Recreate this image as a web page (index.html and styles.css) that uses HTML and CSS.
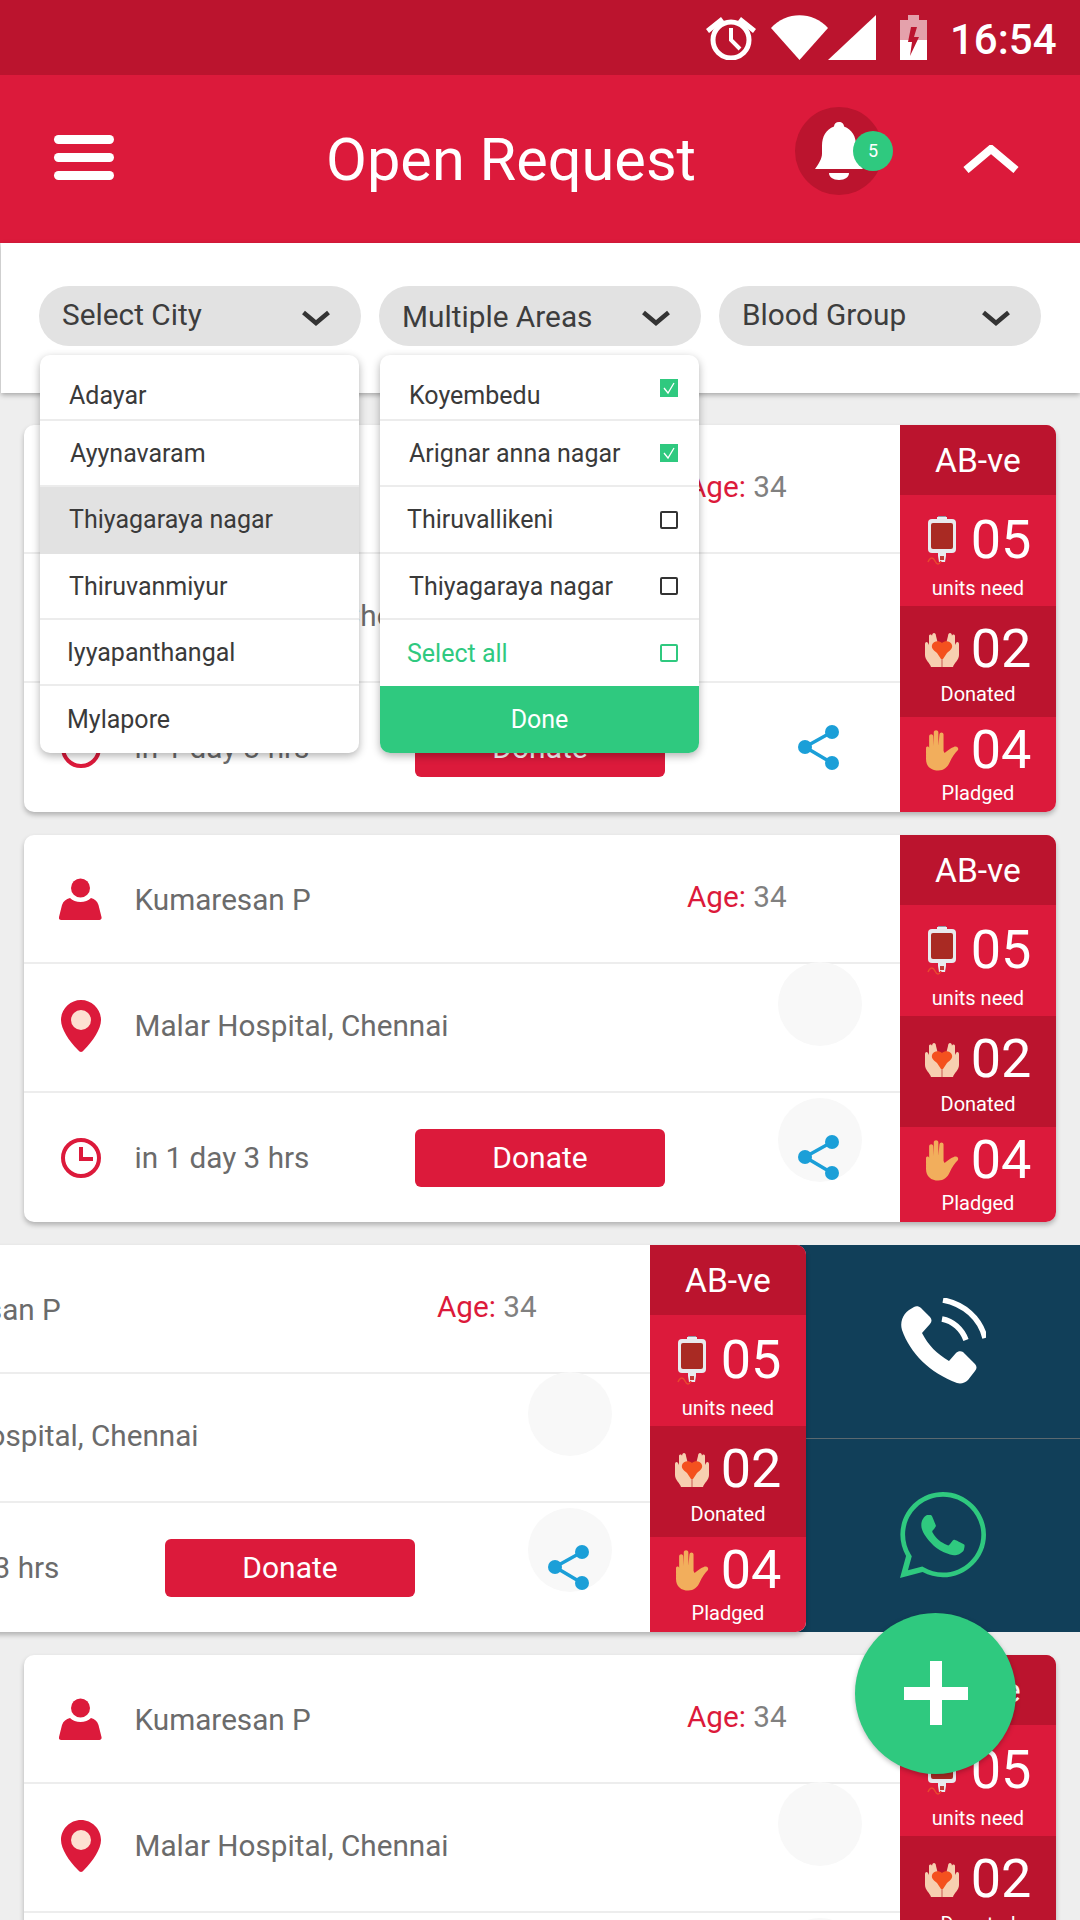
FILE: index.html
```html
<!DOCTYPE html>
<html lang="en">
<head>
<meta charset="utf-8">
<title>Open Request</title>
<link rel="stylesheet" href="styles.css">
</head>
<body>
<svg class="defs" width="0" height="0" aria-hidden="true">
  <symbol id="i-person" viewBox="0 0 43 42"><circle cx="21.5" cy="10" r="9.500"/><path d="M11 20c2.500 2.500 6.500 4 10.500 4s8-1.500 10.500-4c4 1 6 3 7.500 7l3 12c.4 2-.6 3-2 3H2c-1.400 0-2.400-1-2-3l3-12c1.500-4 4-6 8-7z"/></symbol>
  <symbol id="i-pin" viewBox="0 0 40 52"><path d="M20 0C9 0 0 9 0 20c0 9 8 21 17 30 2 2.500 4 2.500 6 0 9-9 17-21 17-30C40 9 31 0 20 0z"/><circle class="pin-dot" cx="20" cy="20" r="10"/></symbol>
  <symbol id="i-clock" viewBox="0 0 40 40"><circle class="line" cx="20" cy="20" r="18"/><path class="line" d="M20 9v12h12"/></symbol>
  <symbol id="i-share" viewBox="0 0 41 45"><path class="share-line" d="M34 7L7 22l27 16"/><circle cx="34" cy="7" r="7"/><circle cx="7" cy="22" r="7"/><circle cx="34" cy="38" r="7"/></symbol>
  <symbol id="i-bag" viewBox="0 0 30 49">
    <path fill="#8f9aa8" d="M11 0h8v4h-8z"/><path fill="#eceff1" d="M10 1h10v3h-10z"/>
    <rect fill="#e8eaee" x="1" y="3" width="28" height="34" rx="4"/>
    <rect fill="#a92a23" x="4" y="7" width="22" height="26" rx="2"/>
    <path fill="#e8eaee" d="M11 37h8v3l-1 6h-6l-1-6z"/><path fill="#c03a36" d="M13 40h4v4h-4z"/>
    <path class="tube" d="M1 46c2-5 5-5 7-1s4 4 6 0"/>
  </symbol>
  <symbol id="i-hands" viewBox="0 0 34 35">
    <path fill="#f7cfb0" d="M0 12c0-2 2-3 3-1l1 2V4c0-2 3-2 3 0 0-4 4-4 4 0l2 8 3.500 10v13H6c-1-4-6-7-6-12zM34 12c0-2-2-3-3-1l-1 2V4c0-2-3-2-3 0 0-4-4-4-4 0l-2 8-3.500 10v13H28c1-4 6-7 6-12z"/>
    <path fill="#e8b594" d="M16.500 26h1v9h-1z"/>
    <path fill="#f4511e" d="M7 13c1-4 7-5 10-2 3-3 9-2 10 2 1 4-3 6-5 8l-4 6h-2l-4-6c-2-2-6-4-5-8z"/>
  </symbol>
  <symbol id="i-hand" viewBox="0 0 33 39">
    <path fill="#f2ae5c" d="M1 17c0-2 3-2 3 0v3V6c0-3 4-3 4 0l.5 9V2c0-3 4.500-3 4.500 0v13l1-11c.3-3 4-2.500 4 0v16l1 2c2-2 6-5 9-6 3-1 5 1 4 3-3 3-6 7-8 12-2 5-6 8-11 8-7 0-12-4-12-11z"/>
  </symbol>
  <symbol id="i-chev" viewBox="0 0 30 16"><path class="chev-line" d="M2.500 2.500L15 13 27.500 2.500"/></symbol>
</svg>

<div class="app">
  <div class="status">
    <svg class="st-alarm" viewBox="0 0 50 45"><circle class="st-ring" cx="25" cy="25" r="18"/><path class="st-ring thin" d="M25 13v12l9 9"/><path d="M0 14L15 2l3 4L3 18zM50 14L35 2l-3 4 15 12z"/></svg>
    <svg class="st-wifi" viewBox="0 0 57 45"><path d="M0 13C15-4 42-4 57 13L28.500 45z"/></svg>
    <svg class="st-signal" viewBox="0 0 48 45"><path d="M48 0v45H0z"/></svg>
    <svg class="st-batt" viewBox="0 0 27 45"><path class="batt-dim" d="M8 0h11v5h8v20H0V5h8z"/><path d="M0 25h27v20H0z"/><path class="batt-bolt" d="M17 12h-6l-3 15h4l-2 14 9-19h-5z"/></svg>
    <span class="st-time">16:54</span>
  </div>

  <header class="topbar">
    <div class="burger"><span></span><span></span><span></span></div>
    <h1 class="title">Open Request</h1>
    <div class="bell">
      <svg class="bell-icon" viewBox="0 0 48 58"><path d="M24 0c3 0 5 2 5 4.500 8 3 12 10 12 19v8c0 5 3 10 7 15.500H0c4-5.500 7-10.500 7-15.500v-8c0-9 4-16 12-19C19 2 21 0 24 0z"/><path d="M14 51h20c0 4-4 7-10 7s-10-3-10-7z"/></svg>
      <span class="badge">5</span>
    </div>
    <svg class="caret" viewBox="0 0 56 28"><path d="M3 25L28 4l25 21"/></svg>
  </header>

  <section class="filters">
    <div class="filter">
      <div class="pill"><span>Select City</span><svg class="chev"><use href="#i-chev"/></svg></div>
      <ul class="menu">
        <li class="opt"><span class="t-a">Adayar</span></li>
        <li class="opt"><span class="t-b">Ayynavaram</span></li>
        <li class="opt active"><span class="t-a">Thiyagaraya nagar</span></li>
        <li class="opt"><span class="t-a">Thiruvanmiyur</span></li>
        <li class="opt"><span class="t-c">Iyyapanthangal</span></li>
        <li class="opt"><span class="t-c">Mylapore</span></li>
      </ul>
    </div>
    <div class="filter">
      <div class="pill low"><span>Multiple Areas</span><svg class="chev"><use href="#i-chev"/></svg></div>
      <ul class="menu">
        <li class="opt check"><span class="t-a">Koyembedu</span><span class="box on"><svg viewBox="0 0 18 18"><path d="M4 9l4 5 6-10"/></svg></span></li>
        <li class="opt check"><span class="t-a">Arignar anna nagar</span><span class="box on"><svg viewBox="0 0 18 18"><path d="M4 9l4 5 6-10"/></svg></span></li>
        <li class="opt check"><span class="t-c">Thiruvallikeni</span><span class="box"></span></li>
        <li class="opt check"><span class="t-a">Thiyagaraya nagar</span><span class="box"></span></li>
        <li class="opt check green"><span class="t-c">Select all</span><span class="box"></span></li>
        <li class="done">Done</li>
      </ul>
    </div>
    <div class="filter">
      <div class="pill"><span>Blood Group</span><svg class="chev"><use href="#i-chev"/></svg></div>
    </div>
  </section>

  <main class="list">
    <article class="card">
      <div class="info">
        <div class="row"><svg class="ico ico-person"><use href="#i-person"/></svg><span class="txt name">Kumaresan P</span><span class="age"><b>Age:</b> 34</span></div>
        <div class="row r-mid"><svg class="ico ico-pin"><use href="#i-pin"/></svg><span class="txt">Malar Hospital, Chennai</span></div>
        <div class="row last"><svg class="ico ico-clock"><use href="#i-clock"/></svg><span class="txt when">in 1 day 3 hrs</span><button class="donate">Donate</button><svg class="share"><use href="#i-share"/></svg></div>
      </div>
      <aside class="side">
        <div class="group">AB-ve</div>
        <div class="stat units"><div class="num"><svg class="s-ico"><use href="#i-bag"/></svg>05</div><div class="lab">units need</div></div>
        <div class="stat donated"><div class="num"><svg class="s-ico"><use href="#i-hands"/></svg>02</div><div class="lab">Donated</div></div>
        <div class="stat pledged"><div class="num"><svg class="s-ico"><use href="#i-hand"/></svg>04</div><div class="lab">Pladged</div></div>
      </aside>
    </article>

    <article class="card">
      <div class="info">
        <div class="row"><svg class="ico ico-person"><use href="#i-person"/></svg><span class="txt name">Kumaresan P</span><span class="age"><b>Age:</b> 34</span></div>
        <div class="row r-mid"><svg class="ico ico-pin"><use href="#i-pin"/></svg><span class="txt">Malar Hospital, Chennai</span><span class="blob b-mid"></span></div>
        <div class="row last"><svg class="ico ico-clock"><use href="#i-clock"/></svg><span class="txt when">in 1 day 3 hrs</span><button class="donate">Donate</button><span class="blob b-low"></span><svg class="share"><use href="#i-share"/></svg></div>
      </div>
      <aside class="side">
        <div class="group">AB-ve</div>
        <div class="stat units"><div class="num"><svg class="s-ico"><use href="#i-bag"/></svg>05</div><div class="lab">units need</div></div>
        <div class="stat donated"><div class="num"><svg class="s-ico"><use href="#i-hands"/></svg>02</div><div class="lab">Donated</div></div>
        <div class="stat pledged"><div class="num"><svg class="s-ico"><use href="#i-hand"/></svg>04</div><div class="lab">Pladged</div></div>
      </aside>
    </article>

    <div class="swipe">
      <article class="card swiped">
        <div class="info">
          <div class="row"><svg class="ico ico-person"><use href="#i-person"/></svg><span class="txt name">Kumaresan P</span><span class="age"><b>Age:</b> 34</span></div>
          <div class="row r-mid"><svg class="ico ico-pin"><use href="#i-pin"/></svg><span class="txt">Malar Hospital, Chennai</span><span class="blob b-mid"></span></div>
          <div class="row last"><svg class="ico ico-clock"><use href="#i-clock"/></svg><span class="txt when">in 1 day 3 hrs</span><button class="donate">Donate</button><span class="blob b-low"></span><svg class="share"><use href="#i-share"/></svg></div>
        </div>
        <aside class="side">
          <div class="group">AB-ve</div>
          <div class="stat units"><div class="num"><svg class="s-ico"><use href="#i-bag"/></svg>05</div><div class="lab">units need</div></div>
          <div class="stat donated"><div class="num"><svg class="s-ico"><use href="#i-hands"/></svg>02</div><div class="lab">Donated</div></div>
          <div class="stat pledged"><div class="num"><svg class="s-ico"><use href="#i-hand"/></svg>04</div><div class="lab">Pladged</div></div>
        </aside>
      </article>
      <div class="actions">
        <div class="action">
          <svg class="call" viewBox="0 0 86 86"><path class="hs" d="M9 12l5-3c2-1.500 5-1 7 1l9 9c2 2 2 5 0 7l-8 9c6 12 15 21 27 28l7-8c2-2 5-2 7-1l12 12c2 2 2 5 0 7l-7 9c-3 3-7 4-11 3C30 75 10 55 2 32 0 25 2 17 9 12z"/><path class="wave" d="M43 2c21 4 37 18 42 38M42 21c11 2 20 10 24 21"/></svg>
        </div>
        <div class="action">
          <svg class="wa" viewBox="0 32 448 448">
            <path d="M380.900 97.100C339 55.100 283.200 32 223.900 32c-122.400 0-222 99.600-222 222 0 39.100 10.200 77.300 29.600 111L0 480l117.700-30.900c32.400 17.700 68.900 27 106.100 27h.1c122.300 0 224.100-99.600 224.100-222 0-59.300-25.200-115-67.100-157z"/>
            <path class="wa-hole" d="M223.900 438.700c-33.200 0-65.700-8.900-94-25.700l-6.700-4-69.800 18.300L72 359.200l-4.400-7c-18.500-29.400-28.200-63.300-28.200-98.200 0-101.700 82.800-184.500 184.600-184.500 49.300 0 95.600 19.200 130.400 54.100 34.800 34.900 56.200 81.200 56.100 130.500 0 101.800-84.900 184.600-186.600 184.600z" transform="translate(224 254) scale(1.07) translate(-224 -254)"/>
            <path d="M325.100 300.500c-5.500-2.800-32.800-16.200-37.900-18-5.100-1.900-8.800-2.800-12.500 2.800-3.700 5.600-14.300 18-17.600 21.800-3.200 3.700-6.500 4.200-12 1.400-32.600-16.300-54-29.100-75.500-66-5.700-9.800 5.700-9.100 16.300-30.300 1.800-3.700.9-6.900-.5-9.700-1.400-2.800-12.500-30.100-17.100-41.200-4.500-10.800-9.100-9.300-12.500-9.500-3.200-.2-6.900-.2-10.600-.2-3.700 0-9.700 1.400-14.800 6.900-5.100 5.600-19.400 19-19.400 46.300 0 27.300 19.900 53.700 22.600 57.400 2.800 3.700 39.100 59.700 94.800 83.800 35.200 15.200 49 16.500 66.600 13.900 10.700-1.600 32.800-13.400 37.400-26.400 4.600-13 4.600-24.100 3.200-26.400-1.300-2.500-5-3.900-10.500-6.600z"/>
          </svg>
        </div>
      </div>
    </div>

    <article class="card">
      <div class="info">
        <div class="row"><svg class="ico ico-person"><use href="#i-person"/></svg><span class="txt name">Kumaresan P</span><span class="age"><b>Age:</b> 34</span></div>
        <div class="row r-mid"><svg class="ico ico-pin"><use href="#i-pin"/></svg><span class="txt">Malar Hospital, Chennai</span><span class="blob b-mid"></span></div>
        <div class="row last"><svg class="ico ico-clock"><use href="#i-clock"/></svg><span class="txt when">in 1 day 3 hrs</span><button class="donate">Donate</button><span class="blob b-low"></span><svg class="share"><use href="#i-share"/></svg></div>
      </div>
      <aside class="side">
        <div class="group">AB-ve</div>
        <div class="stat units"><div class="num"><svg class="s-ico"><use href="#i-bag"/></svg>05</div><div class="lab">units need</div></div>
        <div class="stat donated"><div class="num"><svg class="s-ico"><use href="#i-hands"/></svg>02</div><div class="lab">Donated</div></div>
        <div class="stat pledged"><div class="num"><svg class="s-ico"><use href="#i-hand"/></svg>04</div><div class="lab">Pladged</div></div>
      </aside>
    </article>
  </main>

  <button class="fab" aria-label="Add"><span class="plus"></span></button>
</div>
</body>
</html>
```

FILE: styles.css
```css
* { box-sizing: border-box; }
html, body { margin: 0; padding: 0; }
body { width: 1080px; height: 1920px; overflow: hidden; background: #eeeeee; font-family: Roboto, "Noto Sans", sans-serif; color: #666; }
.defs { position: absolute; }
.app { position: relative; width: 1080px; height: 1920px; overflow: hidden; }

/* status bar */
.status { height: 75px; background: #bb142e; display: flex; align-items: flex-start; justify-content: flex-end; padding: 15px 24px 0 0; }
.status svg { fill: #fff; height: 45px; flex: none; }
.st-alarm { width: 50px; margin-right: 15px; }
.st-ring { fill: none !important; stroke: #fff; stroke-width: 5; }
.st-ring.thin { stroke-width: 4; }
.st-wifi { width: 57px; }
.st-signal { width: 48px; margin-right: 24px; }
.st-batt { width: 27px; margin-right: 23px; }
.batt-dim { opacity: .6; }
.batt-bolt { fill: #bb142e; }
.st-time { font-size: 42px; font-weight: 500; color: #fff; line-height: 45px; width: 106px; white-space: nowrap; margin-top: 2px; }

/* header */
.topbar { height: 168px; background: #dc1a3b; display: flex; align-items: center; padding-left: 54px; position: relative; }
.burger { width: 60px; display: flex; flex-direction: column; gap: 9px; margin-top: -4px; flex: none; }
.burger span { height: 9px; border-radius: 5px; background: #fff; }
.title { margin: 2px 1px 0 212px; width: 370px; font-size: 59.500px; font-weight: 400; line-height: 70px; color: #fff; white-space: nowrap; flex: none; }
.bell { position: relative; width: 88px; height: 88px; border-radius: 50%; background: #bb142e; margin-left: 98px; margin-top: -16px; flex: none; display: flex; align-items: center; justify-content: center; }
.bell-icon { width: 48px; height: 58px; fill: #fff; }
.badge { position: absolute; left: 58px; top: 24px; width: 40px; height: 40px; border-radius: 50%; background: #2fc97f; color: #fff; font-size: 18px; line-height: 40px; text-align: center; }
.caret { width: 56px; height: 28px; margin-left: 80px; margin-top: 0; flex: none; fill: none; stroke: #fff; stroke-width: 8; }

/* filters */
.filters { height: 150px; margin-left: 1px; background: #fff; display: flex; gap: 18px; padding: 43px 0 0 38px; box-shadow: 0 2px 5px rgba(0,0,0,.3); position: relative; z-index: 3; }
.filter { position: relative; width: 322px; flex: none; }
.pill { height: 60px; border-radius: 30px; background: #e2e2e2; display: flex; align-items: center; justify-content: space-between; padding: 0 30px 4px 23px; font-size: 29.800px; color: #3d3d3d; }
.pill.low { padding-bottom: 0; }
.chev { width: 30px; height: 16px; flex: none; margin-top: 8px; }
.pill.low .chev { margin-top: 4px; }
.chev-line { fill: none; stroke: #333; stroke-width: 4.500; }

.menu { position: absolute; left: 1px; top: 69px; width: 319px; margin: 0; padding: 0; list-style: none; background: #fff; border-radius: 10px; box-shadow: 0 3px 8px rgba(0,0,0,.3); overflow: hidden; font-size: 25px; color: #3a3a3a; }
.opt { height: 66px; display: flex; align-items: center; justify-content: space-between; padding: 0 21px 0 29px; border-bottom: 2px solid #ececec; }
.opt:first-child { padding-top: 16px; }
.opt:nth-child(3) { height: 67px; }
.opt.active { background: #e2e2e2; border-bottom-color: #e2e2e2; }
.opt:nth-child(6) { height: 67px; border-bottom: 0; padding-top: 0; }
.t-b { margin-left: 1px; }
.t-c { margin-left: -2px; }
.box { width: 18px; height: 18px; border: 2px solid #333; border-radius: 2px; background: #fff; flex: none; }
.box.on { border: 0; border-radius: 0; background: #2fc97f; }
.box svg { display: block; width: 18px; height: 18px; fill: none; stroke: #fff; stroke-width: 1.300; }
.check:first-child .box { margin-top: -14px; }
.green { color: #2fc97f; border-bottom: 0; }
.green .box { border-color: #2fc97f; }
.done { height: 67px; background: #2fc97f; color: #fff; text-align: center; line-height: 68px; }

/* list */
.list { padding-top: 32px; display: flex; flex-direction: column; gap: 23px; }
.card { width: 1032px; height: 387px; margin-left: 24px; flex: none; background: #fff; border-radius: 10px; box-shadow: 0 3px 5px rgba(0,0,0,.25); display: flex; overflow: hidden; }
.info { width: 876px; flex: none; display: flex; flex-direction: column; }
.row { height: 129px; flex: none; display: flex; align-items: center; padding-left: 35px; border-bottom: 2px solid #ededed; position: relative; }
.row.last { height: 129px; border-bottom: 0; }
.r-mid { padding-bottom: 4px; }
.ico { flex: none; fill: #dc1a3b; overflow: visible; }
.ico-person { width: 43px; height: 42px; margin-right: 32.500px; }
.ico-pin { width: 40px; height: 52px; margin: 0 33.500px 0 2px; }
.ico-clock { width: 40px; height: 40px; margin: 0 33.500px 0 2px; }
.line { fill: none; stroke: #dc1a3b; stroke-width: 4; }
.pin-dot { fill: #fde0d2; }
.txt { font-size: 29.700px; color: #6b6b6b; white-space: nowrap; }
.name { width: 552.500px; flex: none; padding-top: 2px; }
.when { width: 280.500px; flex: none; }
.age { font-size: 29.700px; color: #808080; white-space: nowrap; margin-top: -5px; }
.age b { font-weight: 400; color: #dc1a3b; }
.blob { position: absolute; left: 754px; width: 84px; height: 84px; border-radius: 50%; background: #f8f8f8; }
.b-mid { top: -2px; }
.b-low { top: 5px; }
.share { width: 41px; height: 45px; fill: #1b9fd8; flex: none; margin-left: auto; margin-right: 61px; position: relative; }
.share-line { fill: none; stroke: #1b9fd8; stroke-width: 3.500; }
.donate { width: 250px; height: 58px; border: 0; border-radius: 6px; background: #dc1a3b; color: #fff; font: 400 30px Roboto, sans-serif; flex: none; padding: 0; }

/* side column */
.side { width: 156px; flex: none; background: #dc1a3b; color: #fff; display: flex; flex-direction: column; text-align: center; }
.group { height: 70px; background: #bb142e; font-size: 33.500px; line-height: 72px; }
.stat { flex: none; }
.units { height: 111px; padding-top: 18px; }
.donated { height: 111px; padding-top: 16px; background: #bb142e; }
.pledged { height: 95px; padding-top: 6px; }
.num { height: 54px; font-size: 54px; line-height: 54px; display: flex; align-items: center; justify-content: center; gap: 12px; }
.s-ico { width: 34px; height: 49px; flex: none; }
.units .lab { margin-top: 9px; }
.lab { margin-top: 4px; font-size: 20px; line-height: 24px; }
.donated .lab { margin-top: 6px; }
.tube { fill: none; stroke: #e8492f; stroke-width: 1.500; }

/* swiped row */
.swipe { display: flex; height: 387px; flex: none; position: relative; }
.swiped { margin-left: -226px; position: relative; z-index: 1; box-shadow: 0 3px 5px rgba(0,0,0,.25); }
.actions { width: 284px; flex: none; margin-left: -10px; background: #113f59; display: flex; flex-direction: column; }
.action { height: 193.500px; display: flex; align-items: center; justify-content: center; padding-left: 10px; }
.action:first-child { border-bottom: 1px solid #5b6970; }
.call { width: 86px; height: 86px; }
.hs { fill: #fff; }
.wave { fill: none; stroke: #fff; stroke-width: 5.500; }
.wa { width: 86px; height: 86px; fill: #2fc97f; }
.wa-hole { fill: #113f59; }

/* fab */
.fab { position: absolute; left: 855px; top: 1613px; width: 161px; height: 161px; border: 0; border-radius: 50%; background: #2fc97f; box-shadow: 0 2px 5px rgba(0,0,0,.25); z-index: 5; padding: 0; display: flex; align-items: center; justify-content: center; }
.plus { display: block; position: relative; width: 64px; height: 13px; background: #fff; }
.plus::after { content: ""; position: absolute; left: 26px; top: -26px; width: 12px; height: 64px; background: #fff; }
```
